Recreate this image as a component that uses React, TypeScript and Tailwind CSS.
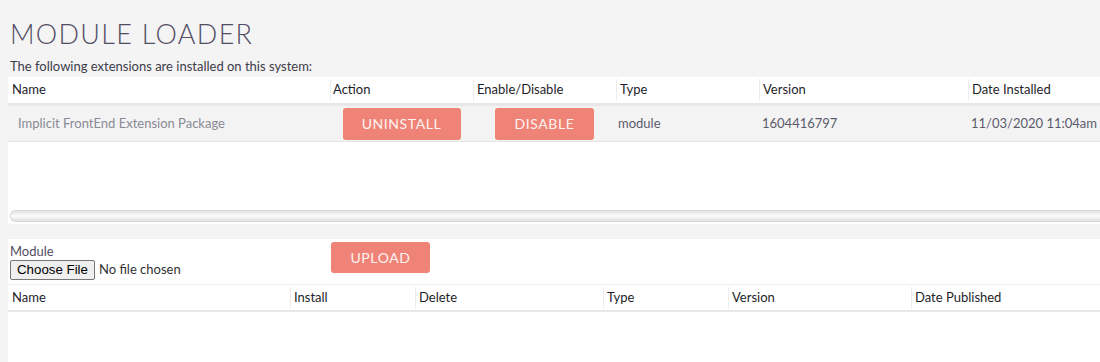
import React from "react";

const headCell = "h-full flex items-center";
const sep = "border-l border-[#ececec]";

function Btn({ label, w, h = "h-[32px]" }: { label: string; w: string; h?: string }) {
  return (
    <div
      className={`${w} ${h} bg-[#f08377] rounded-[3px] flex items-center justify-center text-[#fff3f1] text-[14px] tracking-[0.6px]`}
    >
      {label}
    </div>
  );
}

export default function App() {
  return (
    <div
      className="w-[1100px] h-[362px] bg-[#f4f4f4] overflow-hidden text-[13px]"
      style={{ fontFamily: "Lato, 'Open Sans', sans-serif" }}
    >
      <div className="pl-[10px] pt-[17px] h-[56px]">
        <div className="text-[27px] leading-[34px] font-light tracking-[1.3px] text-[#534d64]">
          MODULE LOADER
        </div>
      </div>
      <div className="pl-[10px] h-[21px] leading-[21px] text-[#3c3c4a]">
        The following extensions are installed on this system:
      </div>

      {/* first panel */}
      <div className="ml-[8px] bg-white h-[147px] flex flex-col">
        <div className="grid grid-cols-[322px_143px_143px_143px_209px_200px] h-[26px] text-[#1e1e2a]">
          <div className={`${headCell} pl-[4px]`}>Name</div>
          <div className={`${headCell}`}><div className={`${sep} h-[22px] flex items-center pl-[2px]`}>Action</div></div>
          <div className={`${headCell}`}><div className={`${sep} h-[22px] flex items-center pl-[3px]`}>Enable/Disable</div></div>
          <div className={`${headCell}`}><div className={`${sep} h-[22px] flex items-center pl-[3px]`}>Type</div></div>
          <div className={`${headCell}`}><div className={`${sep} h-[22px] flex items-center pl-[3px]`}>Version</div></div>
          <div className={`${headCell}`}><div className={`${sep} h-[22px] flex items-center pl-[3px]`}>Date Installed</div></div>
        </div>
        <div className="h-[3px] bg-[#e8e8e8]" />
        <div className="grid grid-cols-[322px_143px_143px_143px_209px_200px] h-[36px] bg-[#f3f3f3] border-b border-[#e4e4e4] items-center">
          <div className="pl-[10px] text-[#8a8a96]">Implicit FrontEnd Extension Package</div>
          <div className="flex justify-center"><Btn label="UNINSTALL" w="w-[118px]" /></div>
          <div className="flex justify-center"><Btn label="DISABLE" w="w-[99px]" /></div>
          <div className="pl-[2px] text-[#5b5b6b]">module</div>
          <div className="pl-[3px] text-[#5b5b6b]">1604416797</div>
          <div className="pl-[3px] text-[#5b5b6b]">11/03/2020 11:04am</div>
        </div>
        <div className="flex-1" />
        <div className="ml-[2px] mb-[2px] h-[12px] rounded-l-full border border-[#d6d6d6] border-r-0 bg-gradient-to-b from-[#e4e4e4] via-[#fbfbfb] to-[#e2e2e2]" />
      </div>

      <div className="h-[15px]" />

      {/* second panel */}
      <div className="ml-[8px] bg-white h-[123px]">
        <div className="flex h-[45px]">
          <div className="w-[323px] pl-[2px] pt-[4px]">
            <div className="text-[#534d64] leading-[16px]">Module</div>
            <div className="flex items-center mt-[1px]">
              <div
                className="h-[20px] px-[6px] border border-[#767676] rounded-[2px] bg-[#efefef] text-[#000] flex items-center text-[13.3px]"
                style={{ fontFamily: "'Liberation Sans', Arial, sans-serif" }}
              >
                Choose File
              </div>
              <span className="ml-[4px] text-[#333]">No file chosen</span>
            </div>
          </div>
          <div className="pt-[3px]">
            <Btn label="UPLOAD" w="w-[99px]" h="h-[31px]" />
          </div>
        </div>
        <div className="grid grid-cols-[282px_125px_188px_125px_183px_189px] h-[28px] border-t border-[#efefef] border-b-2 border-b-[#e8e8e8] text-[#1e1e2a]">
          <div className={`${headCell} pl-[4px]`}>Name</div>
          <div className={`${headCell}`}><div className={`${sep} h-[22px] flex items-center pl-[3px]`}>Install</div></div>
          <div className={`${headCell}`}><div className={`${sep} h-[22px] flex items-center pl-[3px]`}>Delete</div></div>
          <div className={`${headCell}`}><div className={`${sep} h-[22px] flex items-center pl-[3px]`}>Type</div></div>
          <div className={`${headCell}`}><div className={`${sep} h-[22px] flex items-center pl-[3px]`}>Version</div></div>
          <div className={`${headCell}`}><div className={`${sep} h-[22px] flex items-center pl-[3px]`}>Date Published</div></div>
        </div>
      </div>
    </div>
  );
}
